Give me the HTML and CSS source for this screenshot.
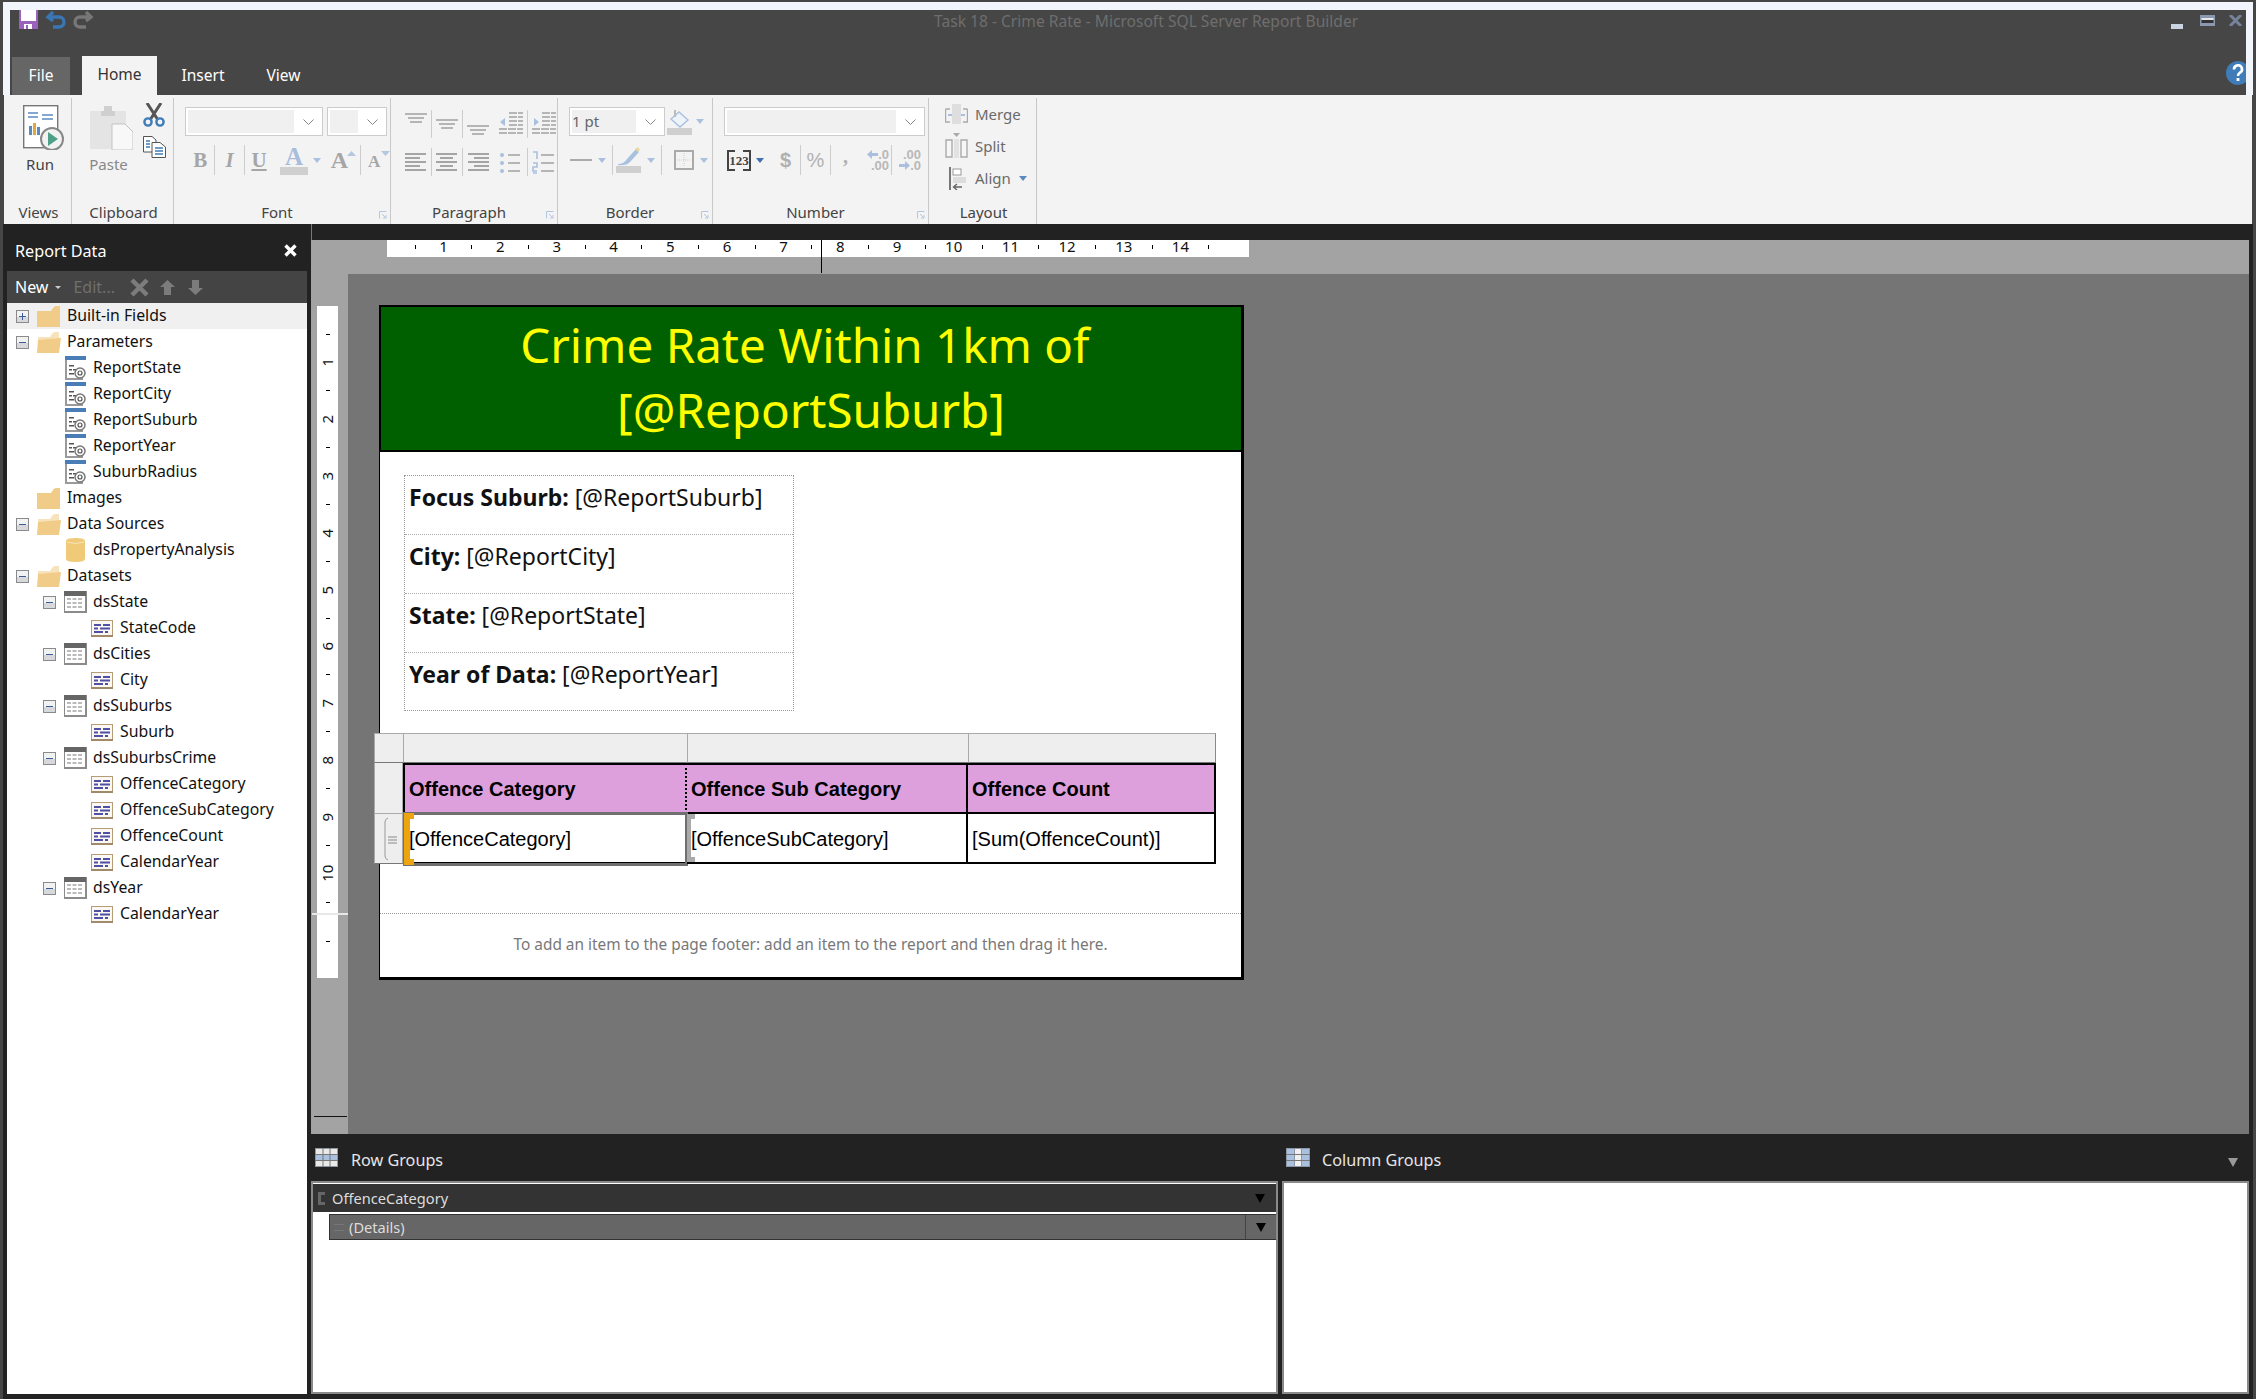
FILE: index.html
```html
<!DOCTYPE html>
<html lang="en">

<head>
    <meta charset="UTF-8" />
    <meta name="viewport" content="width=device-width, initial-scale=1.0" />
    <title>Task 18 - Crime Rate - Microsoft SQL Server Report Builder</title>
    <link rel="stylesheet" href="styles.css">
</head>

<body>
    <!-- Shared icons -->
    <svg class="icon-defs" aria-hidden="true">
        <symbol id="i-plus" viewBox="0 0 13 13">
            <rect x=".5" y=".5" width="12" height="12" fill="#f1f2f4" stroke="#8a8a8a" />
            <rect x="1" y="7" width="11" height="5" fill="#d6d8dc" />
            <rect x="3" y="6" width="7" height="1" fill="#3d5a99" />
            <rect x="6" y="3" width="1" height="7" fill="#3d5a99" />
        </symbol>
        <symbol id="i-minus" viewBox="0 0 13 13">
            <rect x=".5" y=".5" width="12" height="12" fill="#f1f2f4" stroke="#8a8a8a" />
            <rect x="1" y="7" width="11" height="5" fill="#d6d8dc" />
            <rect x="3" y="6" width="7" height="1" fill="#3d5a99" />
        </symbol>
        <symbol id="i-folder" viewBox="0 0 23 21">
            <path d="M0 5 L14 5 L16 2 Q17 0 19 0 L23 0 L23 21 L0 21 Z" fill="#f0cc88" />
        </symbol>
        <symbol id="i-folder-open" viewBox="0 0 24 21">
            <path d="M1 5 L13 5 L15 2 Q16 0 18 0 L22 0 L22 8 L1 8 Z" fill="#f7e3bb" />
            <path d="M0 21 L1 8 L24 6 L22 21 Z" fill="#f0cc88" />
        </symbol>
        <symbol id="i-param" viewBox="0 0 21 24">
            <rect x="0" y="0" width="21" height="23" fill="#fff" />
            <rect x="0" y="0" width="2" height="24" fill="#9a9a9a" />
            <rect x="0" y="22" width="18" height="2" fill="#9a9a9a" />
            <rect x="0" y="0" width="21" height="4" fill="#4a7db5" />
            <rect x="4" y="9" width="5" height="1.5" fill="#555" />
            <rect x="4" y="13" width="3" height="1.5" fill="#555" />
            <rect x="8" y="13" width="3" height="1.5" fill="#555" />
            <rect x="4" y="17" width="5" height="1.5" fill="#555" />
            <circle cx="15" cy="17" r="5" fill="none" stroke="#777" stroke-width="1.5" />
            <circle cx="15" cy="17" r="2" fill="none" stroke="#555" stroke-width="1.2" />
        </symbol>
        <symbol id="i-db" viewBox="0 0 19 24">
            <path d="M0 3 Q0 0 9.5 0 Q19 0 19 3 L19 21 Q19 24 9.5 24 Q0 24 0 21 Z" fill="#f0ca78" />
            <path d="M1 4 Q9.5 7 18 4" fill="none" stroke="#f8e6bf" stroke-width="1" />
        </symbol>
        <symbol id="i-table" viewBox="0 0 23 22">
            <rect x="0" y="0" width="23" height="22" fill="#eeeeee" />
            <rect x="0" y="0" width="22" height="21" fill="#fff" stroke="#8b8b8b" stroke-width="2" />
            <rect x="0" y="0" width="22" height="5" fill="#666" />
            <path d="M3 8 H19 M3 12 H19 M3 16 H19" stroke="#bbb" stroke-width="2" stroke-dasharray="4 1.5" fill="none" />
        </symbol>
        <symbol id="i-field" viewBox="0 0 22 17">
            <rect x=".5" y=".5" width="21" height="16" fill="#faf8f0" stroke="#b59c78" />
            <rect x="0" y="15" width="22" height="2" fill="#a08a6a" />
            <path d="M3 5 H10 M12 5 H19 M3 8.5 H7 M9 8.5 H19 M3 12 H12 M14 12 H17" stroke="#4f4fa8" stroke-width="2" fill="none" />
        </symbol>
        <symbol id="i-lines-top" viewBox="0 0 22 22">
            <path d="M0 1 H22 M3 5 H19 M5 9 H17" stroke="#b5b5b5" stroke-width="2" fill="none" />
        </symbol>
        <symbol id="i-lines-mid" viewBox="0 0 22 22">
            <path d="M0 7 H22 M3 11 H19 M5 15 H17" stroke="#b5b5b5" stroke-width="2" fill="none" />
        </symbol>
        <symbol id="i-lines-bot" viewBox="0 0 22 22">
            <path d="M0 13 H22 M3 17 H19 M5 21 H17" stroke="#b5b5b5" stroke-width="2" fill="none" />
        </symbol>
        <symbol id="i-dec-left" viewBox="0 0 11 9">
            <path d="M5 0 L0 4.500 L5 9 V6 H11 V3 H5 Z" fill="#a9c0de" />
        </symbol>
        <symbol id="i-dec-right" viewBox="0 0 11 9">
            <path d="M6 0 L11 4.500 L6 9 V6 H0 V3 H6 Z" fill="#a9c0de" />
        </symbol>
    </svg>

    <!-- Title bar -->
    <div class="frame">
        <div class="titlebar">
            <div class="qat">
                <svg class="qat-icon" width="19" height="19" viewBox="0 0 19 19">
                    <rect width="19" height="19" fill="#9b62bb" />
                    <rect x="2" y="0" width="15" height="11" fill="#fff" />
                    <rect x="5" y="14" width="8" height="5" fill="#fff" />
                    <rect x="7" y="15" width="2" height="4" fill="#9b62bb" />
                </svg>
                <svg class="qat-icon" width="21" height="19" viewBox="0 0 21 19">
                    <path d="M8 2 L3 7 L8 11 M3 7 H14 A5 5 0 0 1 14 17 H8" fill="none" stroke="#3a76b3" stroke-width="3.4" />
                </svg>
                <svg class="qat-icon" width="21" height="19" viewBox="0 0 21 19">
                    <path d="M13 2 L18 7 L13 11 M18 7 H7 A5 5 0 0 0 7 17 H13" fill="none" stroke="#777" stroke-width="3.4" />
                </svg>
                <div class="app-title">Task 18 - Crime Rate - Microsoft SQL Server Report Builder</div>
                <div class="win-btns">
                    <svg class="win-min" width="12" height="14" viewBox="0 0 12 14"><rect y="9" width="12" height="5" fill="#c9d3e2" /></svg>
                    <svg class="win-max" width="15" height="11" viewBox="0 0 15 11"><rect width="15" height="11" fill="#8b98ad" /><rect x="1.5" y="5" width="12" height="3" fill="#333" /><rect x="1.5" y="3" width="12" height="2" fill="#e4e8ef" /></svg>
                    <svg width="13" height="11" viewBox="0 0 13 11"><path d="M1 0 L12 11 M12 0 L1 11" stroke="#77839a" stroke-width="3" /></svg>
                </div>
            </div>
            <div class="tabs">
                <div class="tab tab-file">File</div>
                <div class="tab tab-home">Home</div>
                <div class="tab tab-insert">Insert</div>
                <div class="tab tab-view">View</div>
                <svg class="help" width="24" height="24" viewBox="0 0 24 24">
                    <circle cx="12" cy="12" r="12" fill="#3f7cb8" />
                    <path d="M8 8.5 A4 4 0 1 1 13.5 12 Q12 13 12 15" fill="none" stroke="#fff" stroke-width="2.6" />
                    <rect x="10.6" y="17" width="2.8" height="3" fill="#fff" />
                </svg>
            </div>
        </div>
    </div>

    <!-- Ribbon -->
    <div class="ribbon">
        <div class="group g-views">
            <div class="group-body center">
                <svg class="run-icon" width="42" height="45" viewBox="0 0 42 45">
                    <rect x=".7" y=".7" width="34" height="42" fill="#fff" stroke="#777" stroke-width="1.4" />
                    <path d="M5 8 H15 M5 12 H15 M19 10 H30 M19 14 H30" stroke="#5b8ac0" stroke-width="1.5" />
                    <rect x="6" y="21" width="3" height="9" fill="#5b8ac0" /><rect x="10" y="18" width="3" height="12" fill="#e2a83e" /><rect x="14" y="22" width="3" height="8" fill="#5b8ac0" />
                    <circle cx="29" cy="34" r="11" fill="#f2f2f2" stroke="#888" stroke-width="2" />
                    <path d="M25 27 L35 34 L25 41 Z" fill="#4fa088" />
                </svg>
                <div class="big-label run-label">Run</div>
            </div>
            <div class="group-label">Views</div>
        </div>

        <div class="group g-clip">
            <div class="group-body clip-body">
                <div class="center paste">
                    <svg width="43" height="45" viewBox="0 0 43 45">
                        <path d="M0 6 H36 V44 H0 Z" fill="#e4e4e4" />
                        <path d="M11 6 H14 V1 H22 V6 H25 V11 H11 Z" fill="#cfcfcf" />
                        <path d="M22 19 H35 L43 27 V45 H22 Z" fill="#f8f8f8" stroke="#c4c4c4" />
                    </svg>
                    <div class="big-label muted paste-label">Paste</div>
                </div>
                <div class="clip-small">
                    <svg width="22" height="24" viewBox="0 0 22 24">
                        <path d="M4 0 L15 17 M18 0 L7 17" stroke="#555" stroke-width="3" />
                        <circle cx="5" cy="19" r="3.6" fill="none" stroke="#3f7cb8" stroke-width="2.4" />
                        <circle cx="17" cy="19" r="3.6" fill="none" stroke="#3f7cb8" stroke-width="2.4" />
                    </svg>
                    <svg width="23" height="22" viewBox="0 0 23 22">
                        <path d="M.5 .5 H9 L13 4 V16 H.5 Z" fill="#fff" stroke="#555" />
                        <path d="M9 6.5 H17 L22.5 11 V21.5 H9 Z" fill="#fff" stroke="#555" />
                        <path d="M3 5 H7 M3 8 H7 M3 11 H7 M12 12 H20 M12 15 H20 M12 18 H20" stroke="#3f7cb8" stroke-width="1.5" />
                    </svg>
                </div>
            </div>
            <div class="group-label">Clipboard</div>
        </div>

        <div class="group g-font">
            <div class="group-body stack">
                <div class="combos">
                    <div class="combo c-font"><span class="combo-fill"></span><svg class="chev" width="11" height="6" viewBox="0 0 11 6"><path d="M.5 .5 L5.5 5.5 L10.5 .5" fill="none" stroke="#888" /></svg></div>
                    <div class="combo c-size"><span class="combo-fill"></span><svg class="chev" width="11" height="6" viewBox="0 0 11 6"><path d="M.5 .5 L5.5 5.5 L10.5 .5" fill="none" stroke="#888" /></svg></div>
                </div>
                <div class="tools font-tools">
                    <span class="fmt fmt-b">B</span><i class="sep"></i>
                    <span class="fmt fmt-i">I</span><i class="sep"></i>
                    <span class="fmt fmt-u">U</span>
                    <span class="fmt-color"><span class="fmt-a">A</span></span>
                    <i class="arrow"></i>
                    <span class="fmt fmt-grow">A</span>
                    <svg class="tri-up" width="9" height="5" viewBox="0 0 9 5"><path d="M0 5 L4.5 0 L9 5 Z" fill="#b4c6e0" /></svg>
                    <i class="sep"></i>
                    <span class="fmt fmt-shrink">A</span>
                    <svg class="tri-down" width="9" height="5" viewBox="0 0 9 5"><path d="M0 0 L4.5 5 L9 0 Z" fill="#b4c6e0" /></svg>
                </div>
            </div>
            <div class="group-label has-launcher">Font</div>
            <svg class="launcher" width="8" height="8" viewBox="0 0 8 8"><path d="M.5 7.5 V.5 H7.5 M3 3 L7 7 M7 4 V7 H4" fill="none" stroke="#b4c6e0" /></svg>
        </div>

        <div class="group g-para">
            <div class="group-body stack para-body">
                <div class="para-row">
                    <svg width="22" height="22"><use href="#i-lines-top" /></svg><i class="sep"></i>
                    <svg width="22" height="22"><use href="#i-lines-mid" /></svg><i class="sep"></i>
                    <svg width="22" height="22"><use href="#i-lines-bot" /></svg>
                    <svg class="ind" width="24" height="24" viewBox="0 0 24 24"><path d="M10 1 H24 M10 5 H24 M10 9 H24 M10 13 H24 M0 17 H24 M0 21 H24" stroke="#b5b5b5" stroke-width="2" stroke-dasharray="8 1" /><path d="M1 10 L6 6 V14 Z" fill="#a9c0de" /></svg><i class="sep"></i>
                    <svg width="24" height="24" viewBox="0 0 24 24"><path d="M10 1 H24 M10 5 H24 M10 9 H24 M10 13 H24 M0 17 H24 M0 21 H24" stroke="#b5b5b5" stroke-width="2" stroke-dasharray="8 1" /><path d="M7 10 L2 6 V14 Z" fill="#a9c0de" /></svg>
                </div>
                <div class="para-row">
                    <svg width="22" height="22" viewBox="0 0 22 22"><path d="M0 3 H21 M0 7 H15 M0 11 H21 M0 15 H15 M0 19 H21" stroke="#a5a5a5" stroke-width="2" /></svg><i class="sep"></i>
                    <svg width="22" height="22" viewBox="0 0 22 22"><path d="M0 3 H21 M4 7 H17 M0 11 H21 M4 15 H17 M0 19 H21" stroke="#a5a5a5" stroke-width="2" /></svg><i class="sep"></i>
                    <svg width="22" height="22" viewBox="0 0 22 22"><path d="M1 3 H22 M7 7 H22 M1 11 H22 M7 15 H22 M1 19 H22" stroke="#a5a5a5" stroke-width="2" /></svg>
                    <svg class="ind" width="24" height="24" viewBox="0 0 24 24"><circle cx="3" cy="5" r="2" fill="#a9c0de" /><circle cx="3" cy="13" r="2" fill="#a9c0de" /><circle cx="3" cy="21" r="2" fill="#a9c0de" /><path d="M9 5 H21 M9 13 H21 M9 21 H21" stroke="#b5b5b5" stroke-width="2" /></svg><i class="sep"></i>
                    <svg width="24" height="24" viewBox="0 0 24 24"><path d="M1 2 H5 V9 M1 13 H5 V17 H1 V21 H5 M1 23 H5" fill="none" stroke="#a9c0de" stroke-width="1.6" /><path d="M9 5 H22 M9 13 H22 M9 21 H22" stroke="#b5b5b5" stroke-width="2" /></svg>
                </div>
            </div>
            <div class="group-label has-launcher">Paragraph</div>
            <svg class="launcher" width="8" height="8" viewBox="0 0 8 8"><path d="M.5 7.5 V.5 H7.5 M3 3 L7 7 M7 4 V7 H4" fill="none" stroke="#b4c6e0" /></svg>
        </div>

        <div class="group g-border">
            <div class="group-body stack border-body">
                <div class="combos">
                    <div class="combo c-pt"><span class="combo-fill">1 pt</span><svg class="chev" width="11" height="6" viewBox="0 0 11 6"><path d="M.5 .5 L5.5 5.5 L10.5 .5" fill="none" stroke="#888" /></svg></div>
                    <svg class="fill-icon" width="25" height="26" viewBox="0 0 25 26">
                        <path d="M4 10 L12 3 L21 11 L13 18 Z" fill="#eef3fa" stroke="#a9c0de" stroke-width="1.4" />
                        <path d="M8 1 V8" stroke="#bbb" stroke-width="2" />
                        <rect y="19" width="25" height="7" fill="#cfcfcf" />
                    </svg>
                    <i class="arrow"></i>
                </div>
                <div class="tools border-tools">
                    <svg width="22" height="6" viewBox="0 0 22 6"><rect y="2" width="22" height="2" fill="#aaa" /></svg>
                    <i class="arrow"></i><i class="sep"></i>
                    <svg class="pen" width="25" height="26" viewBox="0 0 25 26">
                        <path d="M2 17 Q8 17 11 12 L20 2 L23 5 L14 15 Q10 19 2 18 Z" fill="#a9c0de" />
                        <path d="M19 2 L22 0 L24 3 L22 5 Z" fill="#e8d8a0" />
                        <rect y="19" width="25" height="7" fill="#cfcfcf" />
                    </svg>
                    <i class="arrow"></i><i class="sep"></i>
                    <svg class="box-icon" width="20" height="20" viewBox="0 0 20 20">
                        <rect x="1" y="1" width="18" height="18" fill="none" stroke="#aaa" stroke-width="2" />
                        <path d="M10 3 V17 M3 10 H17" stroke="#ccc" stroke-dasharray="1 1" />
                    </svg>
                    <i class="arrow"></i>
                </div>
            </div>
            <div class="group-label has-launcher">Border</div>
            <svg class="launcher" width="8" height="8" viewBox="0 0 8 8"><path d="M.5 7.5 V.5 H7.5 M3 3 L7 7 M7 4 V7 H4" fill="none" stroke="#b4c6e0" /></svg>
        </div>

        <div class="group g-number">
            <div class="group-body stack">
                <div class="combos">
                    <div class="combo c-num"><span class="combo-fill"></span><svg class="chev" width="11" height="6" viewBox="0 0 11 6"><path d="M.5 .5 L5.5 5.5 L10.5 .5" fill="none" stroke="#888" /></svg></div>
                </div>
                <div class="tools num-tools">
                    <span class="num-box">123</span>
                    <i class="arrow arrow-dark"></i>
                    <span class="num-sym n-dollar">$</span><i class="sep"></i>
                    <span class="num-sym n-pct">%</span><i class="sep"></i>
                    <span class="num-sym n-comma">,</span>
                    <span class="dec">
                        <span class="dec-line"><svg width="11" height="9"><use href="#i-dec-left" /></svg>.0</span>
                        <span class="dec-line">.00</span>
                    </span><i class="sep"></i>
                    <span class="dec">
                        <span class="dec-line">.00</span>
                        <span class="dec-line"><svg width="11" height="9"><use href="#i-dec-right" /></svg>.0</span>
                    </span>
                </div>
            </div>
            <div class="group-label has-launcher">Number</div>
            <svg class="launcher" width="8" height="8" viewBox="0 0 8 8"><path d="M.5 7.5 V.5 H7.5 M3 3 L7 7 M7 4 V7 H4" fill="none" stroke="#b4c6e0" /></svg>
        </div>

        <div class="group g-layout">
            <div class="group-body layout-body">
                <div class="lay-row">
                    <svg width="23" height="22" viewBox="0 0 23 22"><path d="M.5 6 H5 M.5 6 V19 H5 M22.5 6 H18 M22.5 6 V19 H18" fill="none" stroke="#aaa" stroke-width="1.4" /><rect x="7" y="1" width="9" height="20" fill="#dedede" /><path d="M3 12 H7 M20 12 H16" stroke="#a9c0de" stroke-width="2" /></svg>
                    <span class="lay-text">Merge</span>
                </div>
                <div class="lay-row">
                    <svg width="23" height="26" viewBox="0 0 23 26"><path d="M8 0 H15 L11.500 4 Z" fill="#aaa" /><path d="M1 7 H7 V24 H1 Z M16 7 H22 V24 H16 Z" fill="#f6f6f6" stroke="#aaa" stroke-width="1.4" /><rect x="9" y="6" width="5" height="19" fill="#e2e2e2" /></svg>
                    <span class="lay-text">Split</span>
                </div>
                <div class="lay-row lay-align">
                    <svg width="17" height="23" viewBox="0 0 17 23"><rect x="0" y="0" width="2" height="23" fill="#777" /><rect x="4" y="2" width="8" height="6" fill="#fff" stroke="#999" /><rect x="4" y="10" width="13" height="6" fill="#ddd" /><path d="M13 20 H5 M8 17 L4.500 20 L8 23" fill="none" stroke="#666" stroke-width="1.4" /></svg>
                    <span class="lay-text">Align</span>
                    <i class="arrow arrow-blue"></i>
                </div>
            </div>
            <div class="group-label">Layout</div>
        </div>
    </div>

    <div class="main">
        <!-- Report Data -->
        <div class="side">
            <div class="side-head">
                <span>Report Data</span>
                <svg width="13" height="13" viewBox="0 0 13 13"><path d="M1.500 1.500 L11.500 11.500 M11.500 1.500 L1.500 11.500" stroke="#fff" stroke-width="3.4" /></svg>
            </div>
            <div class="side-tools">
                <span class="new">New</span>
                <i class="mini-arrow"></i>
                <span class="edit">Edit...</span>
                <svg class="del" width="19" height="19" viewBox="0 0 19 19"><path d="M2 2 L17 17 M17 2 L2 17" stroke="#7c7c7c" stroke-width="4.500" /></svg>
                <svg class="up" width="15" height="15" viewBox="0 0 15 15"><path d="M7.500 0 L15 7 H11 V15 H4 V7 H0 Z" fill="#7c7c7c" /></svg>
                <svg class="down" width="15" height="15" viewBox="0 0 15 15"><path d="M7.500 15 L15 8 H11 V0 H4 V8 H0 Z" fill="#7c7c7c" /></svg>
            </div>
            <div class="tree">
                <div class="row lvl0 hover"><svg class="exp" width="13" height="13"><use href="#i-plus" /></svg><svg class="ic-folder" width="23" height="21"><use href="#i-folder" /></svg><span>Built-in Fields</span></div>
                <div class="row lvl0"><svg class="exp" width="13" height="13"><use href="#i-minus" /></svg><svg class="ic-folder" width="24" height="21"><use href="#i-folder-open" /></svg><span>Parameters</span></div>
                <div class="row lvl1"><svg class="ic-param" width="21" height="24"><use href="#i-param" /></svg><span>ReportState</span></div>
                <div class="row lvl1"><svg class="ic-param" width="21" height="24"><use href="#i-param" /></svg><span>ReportCity</span></div>
                <div class="row lvl1"><svg class="ic-param" width="21" height="24"><use href="#i-param" /></svg><span>ReportSuburb</span></div>
                <div class="row lvl1"><svg class="ic-param" width="21" height="24"><use href="#i-param" /></svg><span>ReportYear</span></div>
                <div class="row lvl1"><svg class="ic-param" width="21" height="24"><use href="#i-param" /></svg><span>SuburbRadius</span></div>
                <div class="row lvl0 no-exp"><svg class="ic-folder" width="23" height="21"><use href="#i-folder" /></svg><span>Images</span></div>
                <div class="row lvl0"><svg class="exp" width="13" height="13"><use href="#i-minus" /></svg><svg class="ic-folder" width="24" height="21"><use href="#i-folder-open" /></svg><span>Data Sources</span></div>
                <div class="row lvl1"><svg class="ic-db" width="19" height="24"><use href="#i-db" /></svg><span>dsPropertyAnalysis</span></div>
                <div class="row lvl0"><svg class="exp" width="13" height="13"><use href="#i-minus" /></svg><svg class="ic-folder" width="24" height="21"><use href="#i-folder-open" /></svg><span>Datasets</span></div>
                <div class="row lvl1-exp"><svg class="exp" width="13" height="13"><use href="#i-minus" /></svg><svg class="ic-table" width="23" height="22"><use href="#i-table" /></svg><span>dsState</span></div>
                <div class="row lvl2"><svg class="ic-field" width="22" height="17"><use href="#i-field" /></svg><span>StateCode</span></div>
                <div class="row lvl1-exp"><svg class="exp" width="13" height="13"><use href="#i-minus" /></svg><svg class="ic-table" width="23" height="22"><use href="#i-table" /></svg><span>dsCities</span></div>
                <div class="row lvl2"><svg class="ic-field" width="22" height="17"><use href="#i-field" /></svg><span>City</span></div>
                <div class="row lvl1-exp"><svg class="exp" width="13" height="13"><use href="#i-minus" /></svg><svg class="ic-table" width="23" height="22"><use href="#i-table" /></svg><span>dsSuburbs</span></div>
                <div class="row lvl2"><svg class="ic-field" width="22" height="17"><use href="#i-field" /></svg><span>Suburb</span></div>
                <div class="row lvl1-exp"><svg class="exp" width="13" height="13"><use href="#i-minus" /></svg><svg class="ic-table" width="23" height="22"><use href="#i-table" /></svg><span>dsSuburbsCrime</span></div>
                <div class="row lvl2"><svg class="ic-field" width="22" height="17"><use href="#i-field" /></svg><span>OffenceCategory</span></div>
                <div class="row lvl2"><svg class="ic-field" width="22" height="17"><use href="#i-field" /></svg><span>OffenceSubCategory</span></div>
                <div class="row lvl2"><svg class="ic-field" width="22" height="17"><use href="#i-field" /></svg><span>OffenceCount</span></div>
                <div class="row lvl2"><svg class="ic-field" width="22" height="17"><use href="#i-field" /></svg><span>CalendarYear</span></div>
                <div class="row lvl1-exp"><svg class="exp" width="13" height="13"><use href="#i-minus" /></svg><svg class="ic-table" width="23" height="22"><use href="#i-table" /></svg><span>dsYear</span></div>
                <div class="row lvl2"><svg class="ic-field" width="22" height="17"><use href="#i-field" /></svg><span>CalendarYear</span></div>
            </div>
        </div>

        <div class="work">
            <div class="work-top"></div>

            <!-- Design surface -->
            <div class="design">
                <div class="ruler-band">
                    <div class="hruler">
                        <i></i><b>1</b><i></i><b>2</b><i></i><b>3</b><i></i><b>4</b><i></i><b>5</b><i></i><b>6</b><i></i><b>7</b><i></i><b>8</b><i></i><b>9</b><i></i><b>10</b><i></i><b>11</b><i></i><b>12</b><i></i><b>13</b><i></i><b>14</b><i></i>
                    </div>
                    <div class="ruler-cursor"></div>
                </div>
                <div class="design-row">
                    <div class="vband">
                        <div class="vruler">
                            <i></i><b>1</b><i></i><b>2</b><i></i><b>3</b><i></i><b>4</b><i></i><b>5</b><i></i><b>6</b><i></i><b>7</b><i></i><b>8</b><i></i><b>9</b><i></i><b>10</b><i></i><i class="last-tick"></i>
                        </div>
                        <div class="body-mark"></div>
                        <div class="end-mark"></div>
                    </div>
                    <div class="canvas">
                        <div class="page">
                            <div class="banner">Crime Rate Within 1km of&nbsp;<br>[@ReportSuburb]</div>
                            <div class="info">
                                <div class="info-row"><strong>Focus Suburb:</strong> [@ReportSuburb]</div>
                                <div class="info-row"><strong>City:</strong> [@ReportCity]</div>
                                <div class="info-row"><strong>State:</strong> [@ReportState]</div>
                                <div class="info-row"><strong>Year of Data:</strong> [@ReportYear]</div>
                            </div>
                            <div class="tablix">
                                <div class="handle"></div>
                                <div class="handle"></div>
                                <div class="handle"></div>
                                <div class="handle handle-end"></div>
                                <div class="handle handle-side"></div>
                                <div class="cell head first">Offence Category</div>
                                <div class="cell head dotted">Offence Sub Category</div>
                                <div class="cell head">Offence Count</div>
                                <div class="handle handle-row">
                                    <svg width="14" height="44" viewBox="0 0 14 44"><path d="M4 1 Q1 2 1 5 V39 Q1 42 4 43" fill="none" stroke="#999" /><path d="M4 20 H13 M4 23 H13 M4 26 H13" stroke="#888" /></svg>
                                </div>
                                <div class="cell data first">[OffenceCategory]
                                    <div class="sel"></div>
                                    <div class="sel-mark"></div>
                                </div>
                                <div class="cell data">[OffenceSubCategory]
                                    <div class="sel-mark grey"></div>
                                </div>
                                <div class="cell data">[Sum(OffenceCount)]</div>
                            </div>
                            <div class="page-foot">To add an item to the page footer: add an item to the report and then drag it here.</div>
                        </div>
                    </div>
                </div>
            </div>

            <!-- Grouping -->
            <div class="groups-head">
                <div class="gh-left">
                    <svg width="23" height="19" viewBox="0 0 23 19"><rect width="23" height="19" fill="#8d97a5" /><path d="M1 1 H22 V6 H1 Z M1 13 H22 V18 H1 Z" fill="#e9e9e9" /><path d="M1 7 H22 V12 H1 Z" fill="#a9c0de" /><path d="M8 0 V19 M15 0 V19 M0 6.500 H23 M0 12.500 H23" stroke="#777" /></svg>
                    <span>Row Groups</span>
                </div>
                <div class="gh-right">
                    <svg width="24" height="19" viewBox="0 0 24 19"><rect width="24" height="19" fill="#8d97a5" /><path d="M1 1 H8 V18 H1 Z M16 1 H23 V18 H16 Z" fill="#a9c0de" /><path d="M9 1 H15 V18 H9 Z" fill="#f0f0f0" /><path d="M0 6.500 H24 M0 12.500 H24" stroke="#777" /></svg>
                    <span>Column Groups</span>
                    <svg class="gh-arrow" width="10" height="9" viewBox="0 0 10 9"><path d="M0 0 H10 L5 9 Z" fill="#999" /></svg>
                </div>
            </div>
            <div class="groups-body">
                <div class="gpanel left">
                    <div class="grow g-cat">
                        <span class="bracket"></span>
                        <span class="gname">OffenceCategory</span>
                        <svg class="gdrop" width="10" height="9" viewBox="0 0 10 9"><path d="M0 0 H10 L5 9 Z" fill="#000" /></svg>
                    </div>
                    <div class="grow g-det">
                        <span class="lines"></span>
                        <span class="gname">(Details)</span>
                        <span class="gdrop-box"><svg width="10" height="9" viewBox="0 0 10 9"><path d="M0 0 H10 L5 9 Z" fill="#000" /></svg></span>
                    </div>
                </div>
                <div class="gpanel right"></div>
            </div>
        </div>
    </div>
</body>

</html>
```

FILE: styles.css
```css
* {
    box-sizing: border-box;
}

html,
body {
    margin: 0;
    padding: 0;
}

body {
    width: 2256px;
    height: 1399px;
    overflow: hidden;
    background-color: #464646;
    font-family: "Noto Sans", "Open Sans", sans-serif;
    font-size: 15px;
    color: #333;
}

svg {
    display: block;
    flex: none;
}

.icon-defs {
    position: absolute;
    width: 0;
    height: 0;
}

/* Title bar */
.frame {
    margin: 2px 3px 0;
    height: 93px;
    padding: 8px 7px 0;
    background-color: #f2f6fc;
}

.titlebar {
    height: 85px;
    background-color: #464646;
    display: flex;
    flex-direction: column;
    overflow: hidden;
}

.qat {
    height: 46px;
    display: flex;
    align-items: flex-start;
}

.qat-icon {
    margin-left: 7px;
    margin-top: 0;
}

.qat-icon:first-child {
    margin-left: 9px;
}

.app-title {
    margin-left: 840px;
    margin-top: 1px;
    color: #6e6e6e;
    font-size: 15.6px;
    line-height: 20px;
    width: 425px;
    white-space: nowrap;
}

.win-btns {
    margin-left: auto;
    margin-right: 4px;
    display: flex;
    margin-top: 5px;
}

.win-min {
    margin-right: 17px;
}

.win-max {
    margin-right: 14px;
}

.tabs {
    height: 39px;
    display: flex;
    align-items: flex-end;
    padding-left: 2px;
    color: #fff;
    font-size: 15.5px;
}

.tab {
    height: 38px;
    line-height: 36px;
    text-align: center;
}

.tab-file {
    width: 58px;
    background-color: #666;
    margin-right: 12px;
}

.tab-home {
    width: 75px;
    height: 39px;
    line-height: 37px;
    background-color: #f3f3f3;
    color: #333;
}

.tab-insert {
    margin-left: 24px;
    width: 44px;
}

.tab-view {
    margin-left: 40px;
    width: 37px;
}

.help {
    margin-left: auto;
    margin-right: -4px;
    margin-bottom: 10px;
}

/* Ribbon */
.ribbon {
    margin: 0 4px 0 4px;
    height: 129px;
    padding-top: 3px;
    background-color: #f3f3f3;
    display: flex;
}

.group {
    position: relative;
    height: 126px;
    border-right: 1px solid #c8c8c8;
    display: flex;
    flex-direction: column;
    flex: none;
}

.group-body {
    height: 102px;
    flex: none;
}

.group-label {
    text-align: center;
    font-size: 15px;
    line-height: 24px;
    padding-left: 2px;
    color: #444;
}

.group-label.has-launcher {
    padding-left: 0;
    padding-right: 10px;
}

.launcher {
    position: absolute;
    right: 3px;
    bottom: 5px;
}

.g-views {
    width: 68px;
}

.g-clip {
    width: 102px;
}

.g-font {
    width: 217px;
}

.g-para {
    width: 167px;
}

.g-border {
    width: 155px;
}

.g-number {
    width: 216px;
}

.g-layout {
    width: 108px;
}

.center {
    display: flex;
    flex-direction: column;
    align-items: center;
    padding-top: 7px;
}

.big-label {
    margin-top: 4px;
    line-height: 20px;
    color: #444;
}

.run-icon {
    margin-left: 12px;
}

.run-label {
    margin-left: 5px;
}

.paste-label {
    margin-left: -6px;
}

.muted {
    color: #888;
}

.clip-body {
    display: flex;
    padding-left: 18px;
}

.paste {
    width: 43px;
}

.clip-small {
    margin-left: 10px;
    padding-top: 5px;
    display: flex;
    flex-direction: column;
    gap: 9px;
}

.stack {
    padding-top: 9px;
    padding-left: 11px;
}

.combos {
    display: flex;
    align-items: center;
    gap: 4px;
}

.combo {
    height: 29px;
    background-color: #fff;
    border: 1px solid #ccc;
    padding: 2px;
    display: flex;
    align-items: center;
}

.combo-fill {
    display: block;
    height: 23px;
    line-height: 23px;
    background-color: #f0f0f0;
    font-size: 15px;
    color: #666;
}

.chev {
    margin-left: auto;
    margin-right: 6px;
}

.c-font {
    width: 138px;
}

.c-font .combo-fill {
    width: 106px;
}

.c-size {
    width: 60px;
}

.c-size .combo-fill {
    width: 28px;
}

.c-pt {
    width: 96px;
}

.c-pt .combo-fill {
    width: 64px;
}

.c-num {
    width: 201px;
}

.c-num .combo-fill {
    width: 169px;
}

.fill-icon {
    margin-left: -2px;
}

.tools {
    display: flex;
    align-items: center;
    margin-top: 9px;
    height: 30px;
}

.sep {
    display: block;
    width: 1px;
    height: 30px;
    background-color: #ccc;
    flex: none;
}

.arrow {
    display: block;
    flex: none;
    width: 0;
    height: 0;
    border-left: 4px solid transparent;
    border-right: 4px solid transparent;
    border-top: 5px solid #a9c0de;
}

.arrow-dark {
    border-top-color: #3f70b0;
}

.arrow-blue {
    border-top-color: #5f88c0;
    margin-left: -1px;
}

.fmt {
    font-family: "Liberation Serif", serif;
    font-size: 21px;
    line-height: 24px;
    color: #a6a6a6;
    text-align: center;
}

.fmt-b {
    font-weight: bold;
    width: 29px;
    margin-left: 1px;
}

.fmt-i {
    font-style: italic;
    font-weight: bold;
    width: 29px;
}

.fmt-u {
    font-weight: bold;
    text-decoration: underline;
    width: 29px;
}

.fmt-color {
    width: 28px;
    margin-left: 7px;
    height: 30px;
    display: block;
    position: relative;
    background: linear-gradient(#f3f3f3 22px, #cfcfcf 22px);
    margin-right: 5px;
}

.fmt-a {
    display: block;
    font-family: "Liberation Serif", serif;
    font-size: 25px;
    line-height: 24px;
    font-weight: bold;
    color: #a9bcdc;
    text-align: center;
}

.font-tools .arrow {
    margin-right: 10px;
}

.fmt-grow {
    font-size: 24px;
    font-weight: bold;
    width: 18px;
}

.fmt-shrink {
    font-size: 17px;
    font-weight: bold;
    width: 16px;
    margin-left: 5px;
    padding-top: 4px;
}

.tri-up {
    margin: 0 4px 14px -1px;
}

.tri-down {
    margin-bottom: 14px;
    margin-left: -1px;
}

.para-body {
    padding-top: 11px;
    padding-left: 14px;
}

.para-row {
    display: flex;
    align-items: center;
    gap: 4px;
    height: 30px;
    margin-bottom: 8px;
}

.para-row .sep {
    height: 28px;
}

.para-row .ind {
    margin-left: 6px;
}

.border-tools svg:first-child {
    margin-left: 1px;
}

.border-body {
    padding-left: 11px;
}

.border-tools .arrow {
    margin: 0 6px;
}

.pen {
    margin-left: 3px;
}

.box-icon {
    margin-left: 12px;
}

.num-tools {
    margin-left: 3px;
}

.num-box {
    width: 24px;
    height: 21px;
    background:
        linear-gradient(#444, #444) left top / 6px 2px no-repeat,
        linear-gradient(#444, #444) right top / 6px 2px no-repeat,
        linear-gradient(#444, #444) left bottom / 6px 2px no-repeat,
        linear-gradient(#444, #444) right bottom / 6px 2px no-repeat;
    border-left: 2px solid #444;
    border-right: 2px solid #444;
    font-family: "Liberation Serif", serif;
    font-weight: bold;
    font-size: 13px;
    line-height: 21px;
    text-align: center;
    color: #444;
}

.num-tools .arrow {
    margin-left: 5px;
    margin-right: 7px;
}

.num-sym {
    font-family: "Liberation Sans", sans-serif;
    font-size: 20px;
    color: #b0b0b0;
    text-align: center;
    width: 29px;
}

.n-dollar {
    font-weight: bold;
}

.n-comma {
    font-family: "Liberation Serif", serif;
    font-weight: bold;
    margin-top: -8px;
}

.dec {
    font-family: "Liberation Sans", sans-serif;
    font-size: 13px;
    font-weight: bold;
    line-height: 11px;
    color: #b8b8b8;
    width: 31px;
}

.dec-line {
    display: flex;
    align-items: center;
    justify-content: flex-end;
    padding-right: 2px;
}

.layout-body {
    padding: 0 0 0 16px;
    display: flex;
    flex-direction: column;
}

.lay-row {
    display: flex;
    align-items: center;
    gap: 7px;
    height: 32px;
}

.lay-align {
    padding-left: 4px;
    gap: 9px;
}

.lay-text {
    color: #6a6a6a;
    font-size: 15px;
}

/* Main area */
.main {
    margin: 0 3px;
    height: 1175px;
    background-color: #222;
    display: flex;
    padding-bottom: 5px;
}

.side {
    width: 304px;
    display: flex;
    flex-direction: column;
    flex: none;
}

.side-head {
    height: 47px;
    padding: 6px 10px 0 12px;
    display: flex;
    align-items: center;
    justify-content: space-between;
    color: #fff;
    font-size: 16.2px;
}

.side-tools {
    margin-left: 4px;
    height: 32px;
    background-color: #444;
    display: flex;
    align-items: center;
    padding-left: 8px;
    color: #fff;
    font-size: 16px;
}

.new {
    font-size: 16px;
}

.mini-arrow {
    display: block;
    margin-left: 7px;
    width: 0;
    height: 0;
    border-left: 3px solid transparent;
    border-right: 3px solid transparent;
    border-top: 3px solid #ccc;
}

.edit {
    margin-left: 12px;
    color: #6f6f6f;
}

.del {
    margin-left: 15px;
}

.up {
    margin-left: 11px;
}

.down {
    margin-left: 13px;
}

.tree {
    flex: 1;
    margin-left: 4px;
    background-color: #fff;
    color: #111;
}

.row {
    height: 26px;
    display: flex;
    align-items: center;
    white-space: nowrap;
    font-size: 15.8px;
}

.row span {
    margin-top: -2px;
}

.row.hover {
    background-color: #f0f0f0;
}

.exp {
    margin-right: 8px;
}

.lvl0 {
    padding-left: 9px;
}

.lvl0.no-exp {
    padding-left: 30px;
}

.lvl0 .ic-folder {
    margin-right: 7px;
}

.lvl0 svg[width="24"] {
    margin-right: 6px;
}

.lvl1 {
    padding-left: 58px;
}

.ic-param {
    margin-right: 7px;
}

.ic-db {
    margin: 0 8px 0 1px;
}

.lvl1-exp {
    padding-left: 36px;
}

.ic-table {
    margin-right: 6px;
}

.lvl2 {
    padding-left: 84px;
}

.ic-field {
    margin-right: 7px;
}

.work {
    margin-left: 4px;
    width: 1938px;
    display: flex;
    flex-direction: column;
}

.work-top {
    height: 16px;
    border-left: 1px solid #777;
    background-color: #222;
}

.design {
    height: 894px;
    display: flex;
    flex-direction: column;
    background-color: #757575;
}

.ruler-band {
    height: 34px;
    background-color: #a3a3a3;
    position: relative;
}

.hruler {
    margin-left: 76px;
    width: 862px;
    height: 17px;
    padding-left: 14px;
    background-color: #fff;
    display: flex;
    color: #111;
}

.hruler i,
.hruler b {
    flex: 0 0 28.35px;
    display: flex;
    justify-content: center;
    font-style: normal;
    font-weight: normal;
}

.hruler b {
    font-size: 15px;
    line-height: 12px;
}

.hruler i::before {
    content: "";
    width: 1px;
    height: 4px;
    margin-top: 5px;
    background-color: #000;
}

.ruler-cursor {
    position: absolute;
    left: 510px;
    top: 0;
    width: 1px;
    height: 33px;
    background-color: #000;
}

.design-row {
    flex: 1;
    display: flex;
}

.vband {
    width: 37px;
    flex: none;
    background-color: #a3a3a3;
    position: relative;
    padding: 32px 0 0 6px;
}

.vruler {
    width: 21px;
    height: 672px;
    background-color: #fff;
    padding-top: 14px;
    color: #111;
}

.vruler i,
.vruler b {
    height: 28.4px;
    display: flex;
    align-items: center;
    justify-content: center;
    font-style: normal;
    font-weight: normal;
}

.vruler b {
    font-size: 15px;
    transform: rotate(-90deg);
}

.vruler i::before {
    content: "";
    width: 4px;
    height: 1px;
    background-color: #000;
}

.vruler i.last-tick {
    margin-top: 11px;
}

.body-mark {
    position: absolute;
    left: 1px;
    right: 0;
    top: 639px;
    height: 2px;
    background-color: #e8e8e8;
}

.end-mark {
    position: absolute;
    left: 3px;
    right: 1px;
    top: 842px;
    height: 1px;
    background-color: #111;
}

.canvas {
    flex: 1;
    padding: 31px 0 0 31px;
}

/* Report page */
.page {
    width: 865px;
    height: 675px;
    background-color: #fff;
    border-left: 1px solid #000;
    border-right: 3px solid #000;
    border-bottom: 3px solid #000;
}

.banner {
    height: 147px;
    background-color: #006000;
    border-top: 2px solid #000;
    border-bottom: 2px solid #000;
    border-left: 1px solid #000;
    padding-top: 5px;
    color: #ffff00;
    text-align: center;
    font-size: 47.500px;
    line-height: 65px;
}

.info {
    width: 390px;
    margin: 23px 0 22px 24px;
    border: 1px dotted #999;
}

.info-row {
    height: 59px;
    padding: 4px 0 0 4px;
    font-size: 23px;
    line-height: 34px;
    color: #111;
    border-bottom: 1px dotted #aaa;
}

.info-row:last-child {
    height: 57px;
    border-bottom: 0;
}

.tablix {
    margin-left: -6px;
    width: 842px;
    display: grid;
    grid-template-columns: 29px 284px 281px 248px;
    grid-template-rows: 30px 51px 50px;
    font-family: "Liberation Sans", sans-serif;
    font-size: 20px;
    color: #000;
}

.handle {
    background-color: #eee;
    border: 1px solid #aaa;
    border-bottom: 1px solid #777;
    border-right: 0;
}

.handle-end {
    border-right: 1px solid #888;
}

.handle-side {
    border-bottom: 1px solid #aaa;
    border-top: 0;
    border-right: 1px solid #aaa;
}

.handle-row {
    border-top: 0;
    border-right: 1px solid #aaa;
    padding: 3px 0 0 9px;
}

.cell {
    display: flex;
    align-items: center;
    padding-left: 4px;
    padding-top: 2px;
    border-right: 2px solid #000;
    border-bottom: 2px solid #000;
    position: relative;
    white-space: nowrap;
}

.cell.first {
    padding-left: 4px;
    border-left: 2px solid #000;
}

.head {
    background-color: #dda0dd;
    border-top: 2px solid #000;
    font-weight: bold;
}

.head.first {
    border-right: 2px dotted #000;
}

.data.first {
    border-right: 2px dotted #555;
}

.sel {
    position: absolute;
    left: -2px;
    top: -2px;
    right: -3px;
    bottom: -4px;
    border: 3px solid #707070;
    pointer-events: none;
}

.sel-mark {
    position: absolute;
    left: -1px;
    top: -1px;
    bottom: -3px;
    width: 10px;
    border-left: 6px solid #eca50f;
    border-top: 6px solid #eca50f;
    border-bottom: 6px solid #eca50f;
}

.sel-mark.grey {
    left: 0;
    bottom: 0;
    top: 0;
    width: 8px;
    border-left-width: 4px;
    border-top-width: 5px;
    border-bottom-width: 5px;
    border-color: #aaa;
}

.page-foot {
    margin-top: 49px;
    height: 63px;
    border-top: 1px dotted #999;
    padding-top: 20px;
    text-align: center;
    color: #787878;
    font-size: 15.400px;
    line-height: 21px;
}

/* Row and column groups */
.groups-head {
    height: 47px;
    display: flex;
    color: #e6e6e6;
    font-size: 16.2px;
}

.gh-left,
.gh-right {
    display: flex;
    align-items: flex-start;
    padding-top: 14px;
}

.gh-left span,
.gh-right span {
    margin-top: 2px;
    margin-left: 13px;
    line-height: 20px;
}

.gh-left {
    width: 971px;
    padding-left: 4px;
}

.gh-right {
    flex: 1;
    padding-left: 4px;
    padding-right: 11px;
}

.gh-right span {
    margin-left: 12px;
}

.gh-arrow {
    margin-left: auto;
    margin-top: 10px;
}

.groups-body {
    flex: 1;
    display: flex;
    gap: 4px;
}

.gpanel {
    background-color: #fff;
    border: 2px solid #8a8a8a;
}

.gpanel.left {
    width: 967px;
    padding-top: 1px;
}

.gpanel.right {
    flex: 1;
}

.grow {
    height: 28px;
    display: flex;
    align-items: center;
    color: #ddd;
    font-size: 14.600px;
}

.g-cat {
    background-color: #333;
    width: 963px;
    margin-bottom: 2px;
    padding-left: 5px;
}

.g-det {
    height: 26px;
    margin-left: 16px;
    width: 947px;
    background-color: #666;
    border-bottom: 1px solid #333;
    border-top: 1px solid #333;
    border-left: 1px solid #333;
    padding-left: 3px;
}

.bracket {
    width: 7px;
    height: 13px;
    border: 3px solid #666;
    border-right: 0;
    margin-right: 7px;
}

.lines {
    width: 10px;
    height: 7px;
    margin-right: 5px;
    margin-left: 1px;
    border-top: 1px solid #777;
    border-bottom: 1px solid #777;
}

.gname {
    line-height: 20px;
}

.gdrop {
    margin-left: auto;
    margin-right: 11px;
}

.gdrop-box {
    margin-left: auto;
    height: 100%;
    width: 31px;
    border-left: 1px solid #444;
    display: flex;
    align-items: center;
    padding-left: 10px;
}
```
